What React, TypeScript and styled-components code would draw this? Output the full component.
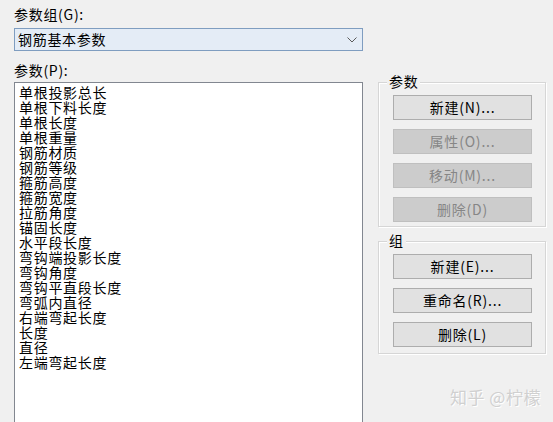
import React from 'react';
import styled, {createGlobalStyle} from 'styled-components';

const GlobalStyle = createGlobalStyle`
    html, body {
        margin: 0;
        padding: 0;
        background: #f0f0f0;
        overflow: hidden;
    }
    body {
        font-family: "Noto Sans CJK SC", "Liberation Sans", sans-serif;
        font-size: 14px;
        letter-spacing: 0.7px;
        color: #000;
    }
`

const WindowBox = styled.div`
    position: relative;
    width: 553px;
    height: 422px;
    box-sizing: border-box;
    padding: 7px 0 0 14px;
    display: grid;
    grid-template-columns: 349px 168px;
    column-gap: 15px;
    align-items: start;
`

const LeftColumn = styled.div`
    display: flex;
    flex-direction: column;
`

const FieldLabel = styled.div<{$gap: number}>`
    height: 15px;
    line-height: 15px;
    margin-bottom: ${props => props.$gap}px;
`

const ComboBox = styled.div`
    height: 23px;
    box-sizing: border-box;
    border: 1px solid #7f9dc0;
    background: #e4ecf6;
    display: flex;
    align-items: center;
    justify-content: space-between;
    padding: 0 5px 0 3px;
    margin-bottom: 12px;
    line-height: 15px;
`

const ListBox = styled.div`
    height: 360px;
    box-sizing: border-box;
    border: 1px solid #828790;
    background: #fff;
    padding: 2px 4px;
    display: flex;
    flex-direction: column;
`

const ListItem = styled.div`
    height: 15px;
    line-height: 15px;
    white-space: nowrap;
`

const RightColumn = styled.div`
    margin-top: 75px;
    display: flex;
    flex-direction: column;
    gap: 14px;
`

// etched frame with its caption sitting on the top edge
const GroupBox = styled.div<{$bottom: number}>`
    position: relative;
    padding: 12px 13px ${props => props.$bottom}px 14px;
    border: 1px solid #d6d6d6;
    box-shadow: 1px 1px 0 #fff, inset 1px 1px 0 #fff;
    display: flex;
    flex-direction: column;
    gap: 9px;
`

const GroupTitle = styled.span`
    position: absolute;
    top: -9px;
    left: 8px;
    padding: 0 2px;
    height: 15px;
    line-height: 15px;
    background: #f0f0f0;
`

const DialogButton = styled.button`
    height: 25px;
    box-sizing: border-box;
    border: 1px solid #adadad;
    background: #e1e1e1;
    font-family: inherit;
    font-size: 14px;
    line-height: 15px;
    color: #000;
    padding: 0;
    letter-spacing: 0.8px;

    &:disabled {
        background: #cccccc;
        border-color: #bfbfbf;
        color: #868686;
    }
`

const Watermark = styled.div`
    position: absolute;
    left: 450px;
    top: 387px;
    font-size: 17px;
    line-height: 20px;
    color: #d0d0d0;
    text-shadow: 1px 1px 0 #fff;
    letter-spacing: 0.5px;
    white-space: nowrap;
`

const Chevron: React.FC = () => (
    <svg width="10" height="6" viewBox="0 0 10 6">
        <polyline points="0.5,0.5 5,5 9.5,0.5" fill="none" stroke="#5a5a5a" strokeWidth="1"/>
    </svg>
)

const parameters = [
    '单根投影总长', '单根下料长度', '单根长度', '单根重量', '钢筋材质',
    '钢筋等级', '箍筋高度', '箍筋宽度', '拉筋角度', '锚固长度',
    '水平段长度', '弯钩端投影长度', '弯钩角度', '弯钩平直段长度', '弯弧内直径',
    '右端弯起长度', '长度', '直径', '左端弯起长度',
]

export default function App() {
    return (
        <WindowBox>
            <GlobalStyle/>
            <LeftColumn>
                <FieldLabel $gap={6}>参数组(G):</FieldLabel>
                <ComboBox>
                    <span>钢筋基本参数</span>
                    <Chevron/>
                </ComboBox>
                <FieldLabel $gap={4}>参数(P):</FieldLabel>
                <ListBox>
                    {parameters.map(p => <ListItem key={p}>{p}</ListItem>)}
                </ListBox>
            </LeftColumn>

            <RightColumn>
                <GroupBox $bottom={4}>
                    <GroupTitle>参数</GroupTitle>
                    <DialogButton>新建(N)...</DialogButton>
                    <DialogButton disabled>属性(O)...</DialogButton>
                    <DialogButton disabled>移动(M)...</DialogButton>
                    <DialogButton disabled>删除(D)</DialogButton>
                </GroupBox>
                <GroupBox $bottom={6}>
                    <GroupTitle>组</GroupTitle>
                    <DialogButton>新建(E)...</DialogButton>
                    <DialogButton>重命名(R)...</DialogButton>
                    <DialogButton>删除(L)</DialogButton>
                </GroupBox>
            </RightColumn>

            <Watermark>知乎 @柠檬</Watermark>
        </WindowBox>
    )
}
